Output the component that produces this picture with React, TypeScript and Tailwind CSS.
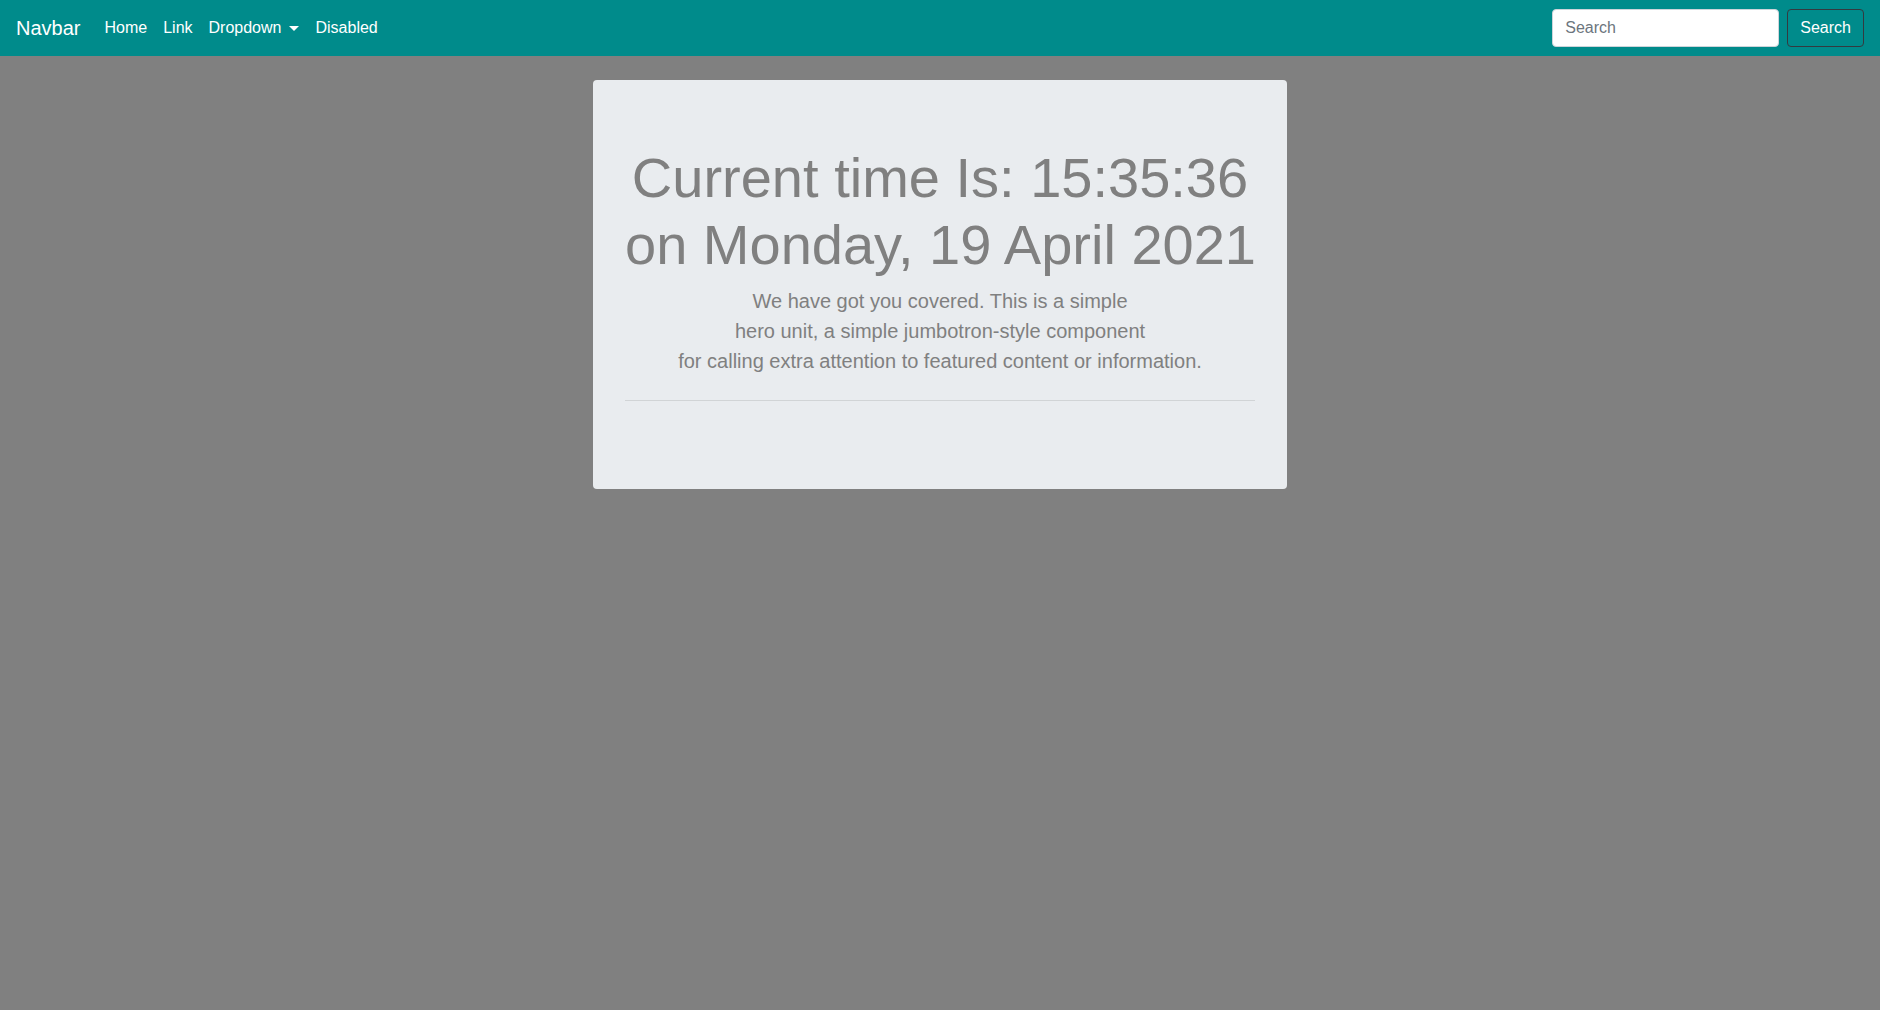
import React from "react";

export default function App() {
  const links = ["Home", "Link", "Dropdown", "Disabled"];

  return (
    <div className="min-h-screen bg-[#808080] font-['Liberation_Sans',Arial,sans-serif] text-base">
      {/* top navbar */}
      <nav className="flex h-14 items-center justify-between bg-[#008b8b] px-4">
        <div className="flex items-center">
          <a href="#" className="mr-4 text-[20px] leading-[30px] text-white">
            Navbar
          </a>
          <ul className="flex items-center">
            {links.map((l) => (
              <li key={l}>
                <a href="#" className="flex items-center px-2 py-2 leading-6 text-white">
                  {l}
                  {l === "Dropdown" && (
                    <span className="ml-[8px] inline-block h-0 w-0 border-x-[5px] border-t-[5px] border-x-transparent border-t-white" />
                  )}
                </a>
              </li>
            ))}
          </ul>
        </div>

        <form className="flex items-center" onSubmit={(e) => e.preventDefault()}>
          <input
            type="search"
            placeholder="Search"
            className="mr-2 h-[38px] w-[227px] rounded-[4px] border border-[#ced4da] bg-white px-3 text-base text-[#495057] outline-none placeholder:text-[#6c757d]"
          />
          <button className="h-[38px] rounded-[4px] border border-[#343a40] px-3 text-base text-white">
            Search
          </button>
        </form>
      </nav>

      {/* jumbotron */}
      <div className="mx-auto mt-6 w-[694px] rounded-[4px] bg-[#e9ecef] px-8 py-16 text-center text-[#808080]">
        <h1 className="mb-2 whitespace-nowrap text-[56px] font-light leading-[1.2]">
          Current time Is: 15:35:36
          <br />
          on Monday, 19 April 2021
        </h1>
        <p className="mb-4 text-[20px] font-light leading-[30px]">
          We have got you covered. This is a simple
          <br />
          hero unit, a simple jumbotron-style component
          <br />
          for calling extra attention to featured content or information.
        </p>
        <hr className="my-6 border-t border-black/10" />
      </div>
    </div>
  );
}
